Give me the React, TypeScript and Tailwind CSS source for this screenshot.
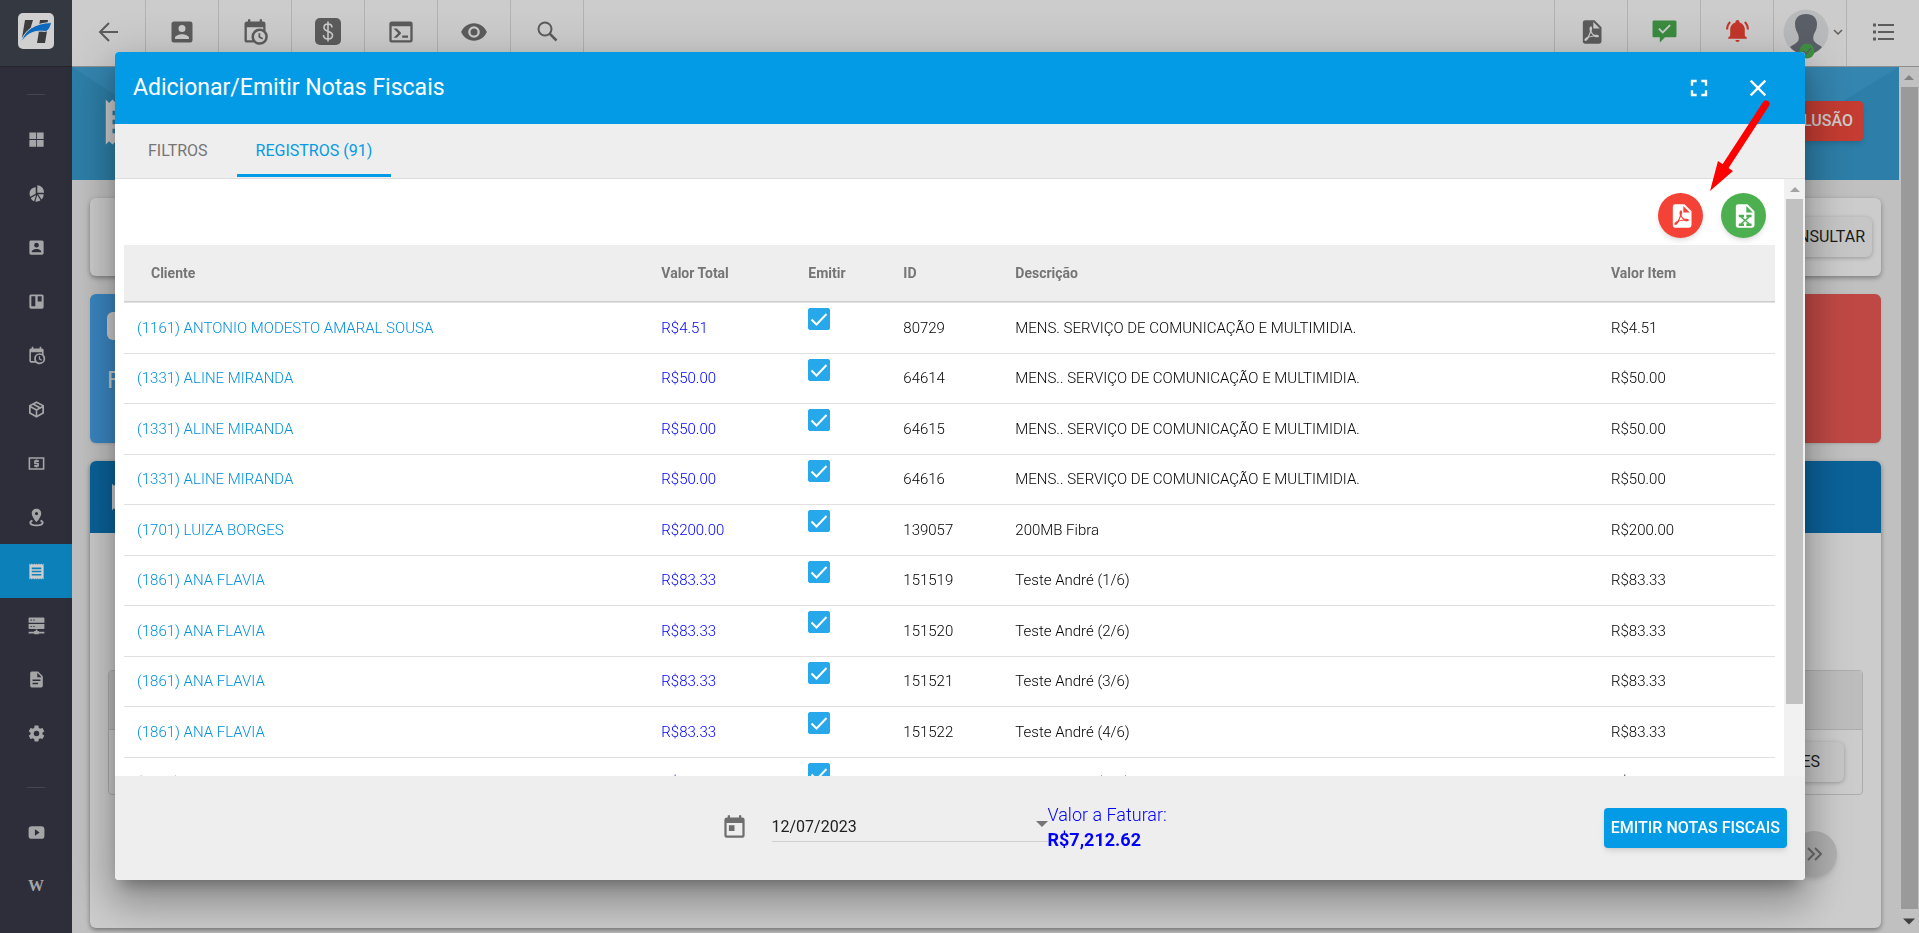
import React, { useState } from 'react'

const ICONS = {
    account: 'M6,17C6,15 10,13.9 12,13.9C14,13.9 18,15 18,17V18H6M15,9A3,3 0 0,1 12,12A3,3 0 0,1 9,9A3,3 0 0,1 12,6A3,3 0 0,1 15,9M3,5V19A2,2 0 0,0 5,21H19A2,2 0 0,0 21,19V5A2,2 0 0,0 19,3H5C3.89,3 3,3.9 3,5Z',
    calendarClock: 'M15,13H16.5V15.82L18.94,17.23L18.19,18.53L15,16.69V13M19,8H5V19H9.67C9.24,18.09 9,17.07 9,16A7,7 0 0,1 16,9C17.07,9 18.09,9.24 19,9.67V8M5,21C3.89,21 3,20.1 3,19V5C3,3.89 3.89,3 5,3H6V1H8V3H16V1H18V3H19A2,2 0 0,1 21,5V11.1C22.24,12.36 23,14.09 23,16A7,7 0 0,1 16,23C14.09,23 12.36,22.24 11.1,21H5M16,11.15A4.85,4.85 0 0,0 11.15,16C11.15,18.68 13.32,20.85 16,20.85A4.85,4.85 0 0,0 20.85,16C20.85,13.32 18.68,11.15 16,11.15Z',
    console: 'M20,19V7H4V19H20M20,3A2,2 0 0,1 22,5V19A2,2 0 0,1 20,21H4A2,2 0 0,1 2,19V5C2,3.89 2.9,3 4,3H20M13,17V15H18V17H13M9.58,13L5.57,9H8.4L11.7,12.3C12.09,12.69 12.09,13.33 11.7,13.72L8.42,17H5.59L9.58,13Z',
    eye: 'M12,9A3,3 0 0,0 9,12A3,3 0 0,0 12,15A3,3 0 0,0 15,12A3,3 0 0,0 12,9M12,17A5,5 0 0,1 7,12A5,5 0 0,1 12,7A5,5 0 0,1 17,12A5,5 0 0,1 12,17M12,4.5C7,4.5 2.73,7.61 1,12C2.73,16.39 7,19.5 12,19.5C17,19.5 21.27,16.39 23,12C21.27,7.61 17,4.5 12,4.5Z',
    bell: 'M21,19V20H3V19L5,17V11C5,7.9 7.03,5.17 10,4.29C10,4.19 10,4.1 10,4A2,2 0 0,1 12,2A2,2 0 0,1 14,4C14,4.1 14,4.19 14,4.29C16.97,5.17 19,7.9 19,11V17L21,19M14,21A2,2 0 0,1 12,23A2,2 0 0,1 10,21M19.75,3.19L18.33,4.61C20.04,6.3 21,8.6 21,11H23C23,8.07 21.84,5.25 19.75,3.19M1,11H3C3,8.6 3.96,6.3 5.67,4.61L4.25,3.19C2.16,5.25 1,8.07 1,11Z',
    check: 'M2,2.5C0.9,2.5 0.5,3 0.5,4V17C0.5,18 1,18.5 2,18.5H7.5V23.5L12.5,18.5H22C23,18.5 23.5,18 23.5,17V4C23.5,3 23,2.5 22,2.5H2M16.7,6.2L18,7.5L10.3,15.2L6,10.9L7.3,9.6L10.3,12.6L16.7,6.2Z',
    calendar: 'M7,10H12V15H7M19,19H5V8H19M19,3H18V1H16V3H8V1H6V3H5C3.89,3 3,3.9 3,5V19A2,2 0 0,0 5,21H19A2,2 0 0,0 21,19V5A2,2 0 0,0 19,3Z',
    fullscreen: 'M5,5H10V7H7V10H5V5M14,5H19V10H17V7H14V5M17,14H19V19H14V17H17V14M10,17V19H5V14H7V17H10Z',
    close: 'M19,6.41L17.59,5L12,10.59L6.41,5L5,6.41L10.59,12L5,17.59L6.41,19L12,13.41L17.59,19L19,17.59L13.41,12L19,6.41Z',
    pdf: 'M14,9H19.5L14,3.5V9M7,2H15L21,8V20A2,2 0 0,1 19,22H7C5.89,22 5,21.1 5,20V4A2,2 0 0,1 7,2M11.93,12.44C12.34,13.34 12.86,14.08 13.46,14.59L13.87,14.91C13,15.07 11.8,15.35 10.53,15.84L10.42,15.88L10.92,14.84C11.37,13.97 11.7,13.18 11.93,12.44M18.41,16.25C18.59,16.07 18.68,15.84 18.69,15.59C18.72,15.39 18.67,15.2 18.57,15.04C18.28,14.57 17.53,14.35 16.29,14.35L15,14.42L14.13,13.84C13.5,13.32 12.93,12.41 12.53,11.28L12.57,11.14C12.9,9.81 13.21,8.2 12.55,7.54C12.39,7.38 12.17,7.3 11.94,7.3H11.7C11.33,7.3 11,7.69 10.91,8.07C10.54,9.4 10.76,10.13 11.13,11.34C10.88,12.23 10.56,13.25 10.05,14.28L9.09,16.08L8.2,16.57C7,17.32 6.43,18.16 6.32,18.69C6.28,18.88 6.3,19.05 6.37,19.23L6.4,19.28L6.88,19.59L7.32,19.7C8.13,19.7 9.05,18.75 10.29,16.63L10.47,16.56C11.5,16.23 12.78,16 14.5,15.81C15.53,16.32 16.74,16.55 17.5,16.55C17.94,16.55 18.24,16.44 18.41,16.25Z',
    excel: 'M14,9H19.5L14,3.5V9M7,2H15L21,8V20A2,2 0 0,1 19,22H7C5.89,22 5,21.1 5,20V4A2,2 0 0,1 7,2M18.500,11H14V13H15.2L13,15L10.8,13H12V11H7.500V13H9L12,15.8L9,18.500H7.500V20.5H12V18.500H10.8L13,16.6L15.2,18.500H14V20.5H18.500V18.500H17L14,15.8L17,13H18.500V11Z',
    grid: 'M3,3H11.5V11.5H3V3M12.5,3H21V11.5H12.5V3M3,12.5H11.5V21H3V12.5M12.5,12.5H21V21H12.5V12.5Z',
    pie: 'M13,1.5C17.5,1.5 21.5,5 21.5,11H13V1.500M11,4V12.2L4.2,16C1.5,9.5 5,4.5 11,4M11.6,13.8L9,21.8C7,21 5.5,19.5 4.8,17.6L11.600,13.800M13,14L17,20.500C15,22 12.500,22.500 10.500,22.200L13,14M14,13H21C21,16 20,18.200 18.400,19.600L14,13Z',
    board: 'M5,3H19A2,2 0 0,1 21,5V19A2,2 0 0,1 19,21H5A2,2 0 0,1 3,19V5A2,2 0 0,1 5,3M5.5,5.5V18H10.5V5.5H5.5M13.5,5.5V12H18.5V5.5H13.5Z',
    cube: 'M12,1.5L21.5,6.5V17L12,22.5L2.5,17V6.5L12,1.5M12,4L9.8,5.1L16.8,8.9L19,7.7L12,4M7.6,6.3L5,7.7L12,11.4L14.5,10.1L7.6,6.3M4.7,9.8V15.9L11,19.4V13.2L4.7,9.8M19.3,9.8L13,13.2V19.4L19.3,15.9V9.8Z',
    cash: 'M2,4H22V20H2V4M4,6V18H20V6H4M11,7H13V8H15V10H11V11H14A1,1 0 0,1 15,12V15A1,1 0 0,1 14,16H13V17H11V16H9V14H13V13H10A1,1 0 0,1 9,12V9A1,1 0 0,1 10,8H11V7Z',
    marker: 'M12,1C15.5,1 18,3.6 18,7C18,11.5 12,18 12,18C12,18 6,11.5 6,7C6,3.6 8.5,1 12,1M12,5A2,2 0 0,0 12,9A2,2 0 0,0 12,5M21,18.5C21,21.5 17,23 12,23C7,23 3,21.5 3,18.5C3,16.8 4.3,15.6 6.3,14.9L7.6,16.6C6.3,17 5.5,17.7 5.5,18.5C5.5,19.8 8.4,20.8 12,20.8C15.6,20.8 18.5,19.8 18.5,18.5C18.5,17.7 17.7,17 16.4,16.6L17.7,14.9C19.7,15.6 21,16.8 21,18.5Z',
    receipt: 'M3,22L4.5,20.5L6,22L7.5,20.5L9,22L10.5,20.5L12,22L13.5,20.5L15,22L16.5,20.5L18,22L19.5,20.5L21,22V2L19.5,3.5L18,2L16.5,3.5L15,2L13.5,3.5L12,2L10.5,3.5L9,2L7.5,3.5L6,2L4.5,3.5L3,2M18,9H6V7H18M18,13H6V11H18M18,17H6V15H18V17Z',
    server: 'M3,2H21A1,1 0 0,1 22,3V8.500H2V3A1,1 0 0,1 3,2M4.500,4.500V6H6V4.500H4.500M8,4.500V6H9.500V4.500H8M2,10H22V15.500A1,1 0 0,1 21,16.500H3A1,1 0 0,1 2,15.500V10M4.500,12.500V14H6V12.500H4.500M8,12.500V14H9.500V12.500H8M11,17H13V19H15V20H22V22H15V23H9V22H2V20H9V19H11Z',
    file: 'M6,2A2,2 0 0,0 4,4V20A2,2 0 0,0 6,22H18A2,2 0 0,0 20,20V8L14,2H6M13,3.5L18.5,9H13V3.5M7,12H17V14H7V12M7,16H14V18H7V16Z',
    cog: 'M12,15.5A3.5,3.5 0 0,1 8.5,12A3.5,3.5 0 0,1 12,8.5A3.5,3.5 0 0,1 15.5,12A3.5,3.5 0 0,1 12,15.5M19.43,12.97C19.47,12.65 19.5,12.33 19.5,12C19.5,11.67 19.47,11.34 19.43,11L21.54,9.37C21.73,9.22 21.78,8.95 21.66,8.73L19.66,5.27C19.54,5.05 19.27,4.96 19.05,5.05L16.56,6.05C16.04,5.66 15.5,5.32 14.87,5.07L14.5,2.42C14.46,2.18 14.25,2 14,2H10C9.75,2 9.54,2.18 9.5,2.42L9.13,5.07C8.5,5.32 7.96,5.66 7.44,6.05L4.95,5.05C4.73,4.96 4.46,5.05 4.34,5.27L2.34,8.73C2.21,8.95 2.27,9.22 2.46,9.37L4.57,11C4.53,11.34 4.5,11.67 4.5,12C4.5,12.33 4.53,12.65 4.57,12.97L2.46,14.63C2.27,14.78 2.21,15.05 2.34,15.27L4.34,18.73C4.46,18.95 4.73,19.03 4.95,18.95L7.44,17.94C7.96,18.34 8.5,18.68 9.13,18.93L9.5,21.58C9.54,21.82 9.75,22 10,22H14C14.25,22 14.46,21.82 14.5,21.58L14.87,18.93C15.5,18.67 16.04,18.34 16.56,17.94L19.05,18.95C19.27,19.03 19.54,18.95 19.66,18.73L21.66,15.27C21.78,15.05 21.73,14.78 21.54,14.63L19.43,12.97Z',
    video: 'M6,4H18A4,4 0 0,1 22,8V16A4,4 0 0,1 18,20H6A4,4 0 0,1 2,16V8A4,4 0 0,1 6,4M10,8V16L16,12L10,8Z',
}

type IconName = keyof typeof ICONS

function Icon({ name, className }: { name: IconName; className?: string }) {
    return (
        <svg viewBox="0 0 24 24" className={className} fill="currentColor" fillRule="evenodd" aria-hidden="true">
            <path d={ICONS[name]} />
        </svg>
    )
}

const rows = [
    { cliente: '(1161) ANTONIO MODESTO AMARAL SOUSA', valor: 'R$4.51', id: '80729', descricao: 'MENS. SERVIÇO DE COMUNICAÇÃO E MULTIMIDIA.' },
    { cliente: '(1331) ALINE MIRANDA', valor: 'R$50.00', id: '64614', descricao: 'MENS.. SERVIÇO DE COMUNICAÇÃO E MULTIMIDIA.' },
    { cliente: '(1331) ALINE MIRANDA', valor: 'R$50.00', id: '64615', descricao: 'MENS.. SERVIÇO DE COMUNICAÇÃO E MULTIMIDIA.' },
    { cliente: '(1331) ALINE MIRANDA', valor: 'R$50.00', id: '64616', descricao: 'MENS.. SERVIÇO DE COMUNICAÇÃO E MULTIMIDIA.' },
    { cliente: '(1701) LUIZA BORGES', valor: 'R$200.00', id: '139057', descricao: '200MB Fibra' },
    { cliente: '(1861) ANA FLAVIA', valor: 'R$83.33', id: '151519', descricao: 'Teste André (1/6)' },
    { cliente: '(1861) ANA FLAVIA', valor: 'R$83.33', id: '151520', descricao: 'Teste André (2/6)' },
    { cliente: '(1861) ANA FLAVIA', valor: 'R$83.33', id: '151521', descricao: 'Teste André (3/6)' },
    { cliente: '(1861) ANA FLAVIA', valor: 'R$83.33', id: '151522', descricao: 'Teste André (4/6)' },
    { cliente: '(1861) ANA FLAVIA', valor: 'R$83.33', id: '151523', descricao: 'Teste André (5/6)' },
]

const menu: { icon: IconName; label: string }[] = [
    { icon: 'grid', label: 'Painel' },
    { icon: 'pie', label: 'Gráficos' },
    { icon: 'account', label: 'Clientes' },
    { icon: 'board', label: 'Quadros' },
    { icon: 'calendarClock', label: 'Agenda' },
    { icon: 'cube', label: 'Estoque' },
    { icon: 'cash', label: 'Financeiro' },
    { icon: 'marker', label: 'Mapa' },
    { icon: 'receipt', label: 'Notas Fiscais' },
    { icon: 'server', label: 'Servidores' },
    { icon: 'file', label: 'Relatórios' },
    { icon: 'cog', label: 'Configurações' },
]

function MenuDivider() {
    return (
        <div className="flex h-[45px] justify-center pt-[27px]">
            <div className="h-px w-[18px] bg-[#45464f]" />
        </div>
    )
}

function Sidebar() {
    return (
        <nav className="flex w-[72px] shrink-0 flex-col bg-[#2d2e3a] text-[#a5a5a8]">
            <div className="flex h-[67px] shrink-0 justify-center border-b border-[#22232b] bg-[#343840] pt-[13px]">
                <svg viewBox="0 0 36 36" className="size-9" aria-hidden="true">
                    <rect width="36" height="36" rx="5" fill="#d0d0d0" />
                    <path d="M7 7h8l-3 10-8 8zM22 7h8l-1 6h-8zM21 18h8l-2 12h-8z" fill="#3c3c3e" />
                    <path d="M3 29.500C6 17 17 10 33.500 9.500c-1 5-3 8-6 9C17 17 9 20 3 29.500z" fill="#0d69bd" stroke="#d0d0d0" strokeWidth="1" />
                </svg>
            </div>
            <MenuDivider />
            {menu.map(item => (
                <a
                    key={item.label}
                    href="#"
                    aria-label={item.label}
                    className={`flex h-[54px] shrink-0 items-center justify-center ${item.icon === 'receipt' ? 'bg-[#0b80b9] text-[#cccccc]' : ''}`}
                >
                    <Icon name={item.icon} className="size-[19px]" />
                </a>
            ))}
            <MenuDivider />
            <a href="#" aria-label="Vídeos" className="flex h-[54px] items-center justify-center">
                <Icon name="video" className="size-[19px]" />
            </a>
            <a href="#" className="flex h-[54px] items-center justify-center font-['Liberation_Serif',serif] text-[16px] font-bold">
                W
            </a>
        </nav>
    )
}

const topCell = 'flex w-[73px] shrink-0 justify-center border-[#b2b2b2] pt-[18px]'

function TopBar() {
    return (
        <header className="flex h-[67px] shrink-0 justify-between overflow-hidden border-b border-[#8f8f8f] bg-[#cccccc] text-[#5c5c5c]">
            <div className="flex pl-px">
                <button aria-label="Voltar" className={`${topCell} border-r`}>
                    <svg viewBox="0 0 28 28" className="size-7" fill="none" stroke="currentColor" strokeWidth="2">
                        <path d="M23 14H6M14 5l-9 9 9 9" />
                    </svg>
                </button>
                <button aria-label="Clientes" className={`${topCell} border-r`}>
                    <Icon name="account" className="size-7" />
                </button>
                <button aria-label="Agenda" className={`${topCell} border-r`}>
                    <Icon name="calendarClock" className="size-7" />
                </button>
                <button aria-label="Financeiro" className={`${topCell} border-r`}>
                    <svg viewBox="0 0 28 28" className="size-7">
                        <rect x="1" y="0" width="26" height="27" rx="5" fill="currentColor" />
                        <path d="M18 9.500c0-2-1.500-3.500-4-3.500s-4 1.400-4 3.600c0 4.900 8.500 2.800 8.500 7.600 0 2.300-2 3.800-4.500 3.800s-4.500-1.500-4.500-4M14 3.500v20" fill="none" stroke="#cccccc" strokeWidth="1.600" />
                    </svg>
                </button>
                <button aria-label="Terminal" className={`${topCell} border-r`}>
                    <Icon name="console" className="size-7" />
                </button>
                <button aria-label="Visualizar" className={`${topCell} border-r`}>
                    <Icon name="eye" className="size-7" />
                </button>
                <button aria-label="Pesquisar" className={`${topCell} border-r`}>
                    <svg viewBox="0 0 28 28" className="size-7" fill="none" stroke="currentColor" strokeWidth="2">
                        <circle cx="12" cy="11" r="6.500" />
                        <path d="M16.500 15.500l7 7" strokeWidth="2.500" />
                    </svg>
                </button>
            </div>
            <div className="flex">
                <button aria-label="PDF" className={`${topCell} border-l`}>
                    <Icon name="pdf" className="size-7" />
                </button>
                <button aria-label="Mensagens" className={`${topCell} border-l text-[#3b8b3f]`}>
                    <Icon name="check" className="size-[25px]" />
                </button>
                <button aria-label="Notificações" className={`${topCell} border-l text-[#c4362b]`}>
                    <Icon name="bell" className="size-[25px]" />
                </button>
                <button aria-label="Perfil" className="flex w-[73px] gap-1 border-l border-[#b2b2b2] pt-[9px] pl-[9px]">
                    <svg viewBox="0 0 46 50" className="h-[50px] w-[46px] shrink-0">
                        <circle cx="23" cy="23" r="22.500" fill="#b9babc" />
                        <path d="M23 5c7 0 11 4 11 10 0 5-2 8-3 10-1 3-1 6 0 7 2 3 6 4 8 6-4 5-10 7.500-16 7.500S11 43 7 38c2-2 6-3 8-6 1-1 1-4 0-7-1-2-3-5-3-10C12 9 16 5 23 5z" fill="#5a5f68" />
                        <circle cx="24" cy="42" r="7.500" fill="#3f9143" />
                        <path d="M20 42l3 3 5-6" fill="none" stroke="#5a5f68" strokeWidth="1.500" />
                    </svg>
                    <svg viewBox="0 0 10 46" className="h-[46px] w-[10px] shrink-0" fill="none" stroke="currentColor" strokeWidth="1.500">
                        <path d="M1 21l4 4 4-4" />
                    </svg>
                </button>
                <button aria-label="Menu" className={`${topCell} border-l`}>
                    <svg viewBox="0 0 28 28" className="size-7" fill="none" stroke="currentColor" strokeWidth="2">
                        <path d="M9 7h16M9 14h16M9 21h16" />
                        <path d="M4 7h3M4 14h3M4 21h3" strokeWidth="3" />
                    </svg>
                </button>
            </div>
        </header>
    )
}

function PageContent() {
    return (
        <main className="flex min-w-0 flex-1 flex-col bg-[#c0c0c0]">
            <div className="relative flex h-[113px] shrink-0 items-start justify-between bg-[#2d7ea8] pr-9 pl-[27px]">
                <svg viewBox="0 0 1827 113" preserveAspectRatio="none" className="absolute inset-0 size-full" aria-hidden="true">
                    <path d="M0 0L174 113H1642L1827 0z" fill="#3485b0" />
                </svg>
                <Icon name="receipt" className="relative mt-7 size-[54px] text-[#cccccc]" />
                <button className="relative mt-[34px] h-10 rounded bg-[#c43c32] px-[10px] text-[16px] font-medium text-[#cccccc] shadow-md">
                    INCLUSÃO
                </button>
            </div>
            <div className="flex flex-1 flex-col gap-[18px] px-[18px] pt-[18px] pb-[5px]">
                <div className="flex h-[78px] shrink-0 items-center justify-end rounded-md bg-[#cccccc] pr-[9px] shadow-[0_2px_5px_rgba(0,0,0,0.35)]">
                    <button className="h-10 rounded-md bg-[#c6c6c6] px-[7px] text-[16px] text-[#1b1b1b] shadow-[0_1px_4px_rgba(0,0,0,0.25)]">
                        CONSULTAR
                    </button>
                </div>
                <div className="grid h-[149px] shrink-0 grid-cols-2 gap-[18px]">
                    <div className="flex flex-col gap-6 rounded-md bg-[#3a86c2] pt-[18px] pl-[17px] text-[#cccccc] shadow-sm">
                        <div className="size-7 shrink-0 rounded-md bg-[#cccccc]" />
                        <span className="text-[24px] leading-8">Faturas</span>
                    </div>
                    <div className="rounded-md bg-[#bf4844] shadow-sm" />
                </div>
                <section className="flex flex-1 flex-col rounded-md bg-[#cccccc] shadow-[0_2px_5px_rgba(0,0,0,0.4)]">
                    <div className="flex h-[72px] shrink-0 items-center rounded-t-md bg-[#0a6299] pl-[18px] text-[#cccccc]">
                        <Icon name="receipt" className="size-8" />
                    </div>
                    <div className="flex flex-1 flex-col items-end px-[18px] pt-[137px]">
                        <table className="w-full border-separate border-spacing-0 rounded border border-[#adadad]">
                            <thead>
                                <tr>
                                    <th className="h-[59px] border-b border-[#adadad] bg-[#bdbdbd] pr-[58px] text-right text-[14px] font-medium text-[#555555]">Ações</th>
                                </tr>
                            </thead>
                            <tbody>
                                <tr>
                                    <td className="h-[64px] pr-[18px] text-right">
                                        <button className="h-10 rounded-md bg-[#c6c6c6] px-6 text-[16px] text-[#1b1b1b] shadow-[0_1px_4px_rgba(0,0,0,0.25)]">
                                            AÇÕES
                                        </button>
                                    </td>
                                </tr>
                            </tbody>
                        </table>
                        <button aria-label="Última página" className="mt-9 mr-[26px] flex size-[46px] items-center justify-center rounded-full bg-[#b0b0b0] text-[#6a6a6a] shadow-md">
                            <svg viewBox="0 0 16 16" className="size-4" fill="none" stroke="currentColor" strokeWidth="2">
                                <path d="M2 2l6 6-6 6M9 2l6 6-6 6" />
                            </svg>
                        </button>
                    </div>
                </section>
            </div>
        </main>
    )
}

function ScrollArrow({ down, className }: { down?: boolean; className: string }) {
    return (
        <svg viewBox="0 0 20 20" className={className} fill="currentColor" aria-hidden="true">
            <path d={down ? 'M5 8h10l-5 5z' : 'M5 13h10l-5-5z'} />
        </svg>
    )
}

function rowHeight(index: number) {
    if (index === 0) return '[&>td]:h-[52px] [&>td]:border-t'
    return index % 2 ? '[&>td]:h-[50px]' : '[&>td]:h-[51px]'
}

function InvoiceTable() {
    const [checked, setChecked] = useState<Record<string, boolean>>({})

    return (
        <table className="w-full table-fixed border-separate border-spacing-0 text-left text-[15px] font-light text-black">
            <thead>
                <tr className="bg-[#eeeeee] text-[14px] text-[#757575] [&>th]:h-[57px] [&>th]:border-b [&>th]:border-[#cfcfcf] [&>th]:font-bold">
                    <th className="w-[32%] pl-[27px]">Cliente</th>
                    <th className="w-[147px] pl-[9px]">Valor Total</th>
                    <th className="w-[95px] pl-[9px]">Emitir</th>
                    <th className="w-[112px] pl-[9px]">ID</th>
                    <th className="pl-[9px]">Descrição</th>
                    <th className="w-[173px] pl-[9px]">Valor Item</th>
                </tr>
            </thead>
            <tbody>
                {rows.map((row, index) => (
                    <tr
                        key={row.id}
                        className={`[&>td]:border-b [&>td]:border-[#e0e0e0] [&>td]:pl-[9px] ${rowHeight(index)}`}
                    >
                        <td>
                            <a href="#" className="pl-1 text-[#0090dd]">{row.cliente}</a>
                        </td>
                        <td className="text-[#0000ff]">{row.valor}</td>
                        <td className="pt-[5px] align-top">
                            <label className="relative block size-[22px]">
                                <input
                                    type="checkbox"
                                    aria-label={`Emitir ${row.id}`}
                                    checked={checked[row.id] ?? true}
                                    onChange={e => setChecked({ ...checked, [row.id]: e.target.checked })}
                                    className="peer block size-[22px] appearance-none rounded-[2px] border border-[#26a8ea] checked:bg-[#26a8ea]"
                                />
                                <svg viewBox="0 0 22 22" className="pointer-events-none absolute inset-0 hidden size-[22px] peer-checked:block" fill="none" stroke="#ffffff" strokeWidth="2">
                                    <path d="M3.500 11.500l5 5 10-10.500" />
                                </svg>
                            </label>
                        </td>
                        <td>{row.id}</td>
                        <td>{row.descricao}</td>
                        <td>{row.valor}</td>
                    </tr>
                ))}
            </tbody>
        </table>
    )
}

function InvoiceDialog() {
    const [date, setDate] = useState('12/07/2023')

    return (
        <div
            role="dialog"
            aria-labelledby="dialog-title"
            className="relative flex h-full w-full flex-col rounded bg-white shadow-[0_11px_15px_-7px_rgba(0,0,0,0.3),0_24px_38px_3px_rgba(0,0,0,0.2),0_9px_46px_8px_rgba(0,0,0,0.14)]"
        >
            <div className="flex h-[72px] shrink-0 items-center rounded-t bg-[#039be5] pr-[33px] pl-[18px] text-white">
                <h2 id="dialog-title" className="flex-1 text-[23px] leading-8">Adicionar/Emitir Notas Fiscais</h2>
                <button aria-label="Tela cheia" className="mr-[31px]">
                    <Icon name="fullscreen" className="size-7" />
                </button>
                <button aria-label="Fechar">
                    <Icon name="close" className="size-7" />
                </button>
            </div>

            <div role="tablist" className="flex h-[55px] shrink-0 gap-[10px] border-b border-[#dddddd] bg-[#eeeeee] pl-[14px] text-[16px]">
                <button role="tab" aria-selected="false" className="mb-px border-b-3 border-transparent px-[19px] pt-1 text-[#757575]">
                    FILTROS
                </button>
                <button role="tab" aria-selected="true" className="mb-px border-b-3 border-[#039be5] px-[19px] pt-1 text-[#039be5]">
                    REGISTROS (91)
                </button>
            </div>

            <div className="flex min-h-0 flex-1">
                <div className="min-w-0 flex-1 overflow-hidden px-[9px]">
                    <div className="flex justify-end gap-[18px] pt-[14px] pr-[9px] pb-[7px] text-white">
                        <button aria-label="Exportar PDF" className="flex size-[45px] items-center justify-center rounded-full bg-[#f44336] shadow-md">
                            <Icon name="pdf" className="size-7" />
                        </button>
                        <button aria-label="Exportar Excel" className="flex size-[45px] items-center justify-center rounded-full bg-[#4caf50] shadow-md">
                            <Icon name="excel" className="size-7" />
                        </button>
                    </div>
                    <InvoiceTable />
                </div>
                <div className="flex w-[21px] shrink-0 flex-col items-center bg-[#f1f1f1]">
                    <ScrollArrow className="size-5 text-[#a3a3a3]" />
                    <div className="h-[505px] w-[17px] bg-[#c1c1c1]" />
                </div>
            </div>

            <div className="grid h-[104px] shrink-0 grid-cols-[1fr_auto_1fr] items-center rounded-b bg-[#eeeeee] px-[18px]">
                <div className="col-start-2 flex items-center pb-[2px]">
                    <Icon name="calendar" className="size-[27px] text-[#6e6e6e]" />
                    <div className="relative ml-6 w-[276px]">
                        <input
                            aria-label="Data de emissão"
                            value={date}
                            onChange={e => setDate(e.target.value)}
                            className="block h-[30px] w-full border-b border-[#cfcfcf] bg-transparent text-[16px] text-[#212121] outline-none"
                        />
                        <svg viewBox="0 0 12 6" className="absolute top-[9px] right-0 h-[6px] w-3" fill="#757575">
                            <path d="M0 0h12L6 6z" />
                        </svg>
                    </div>
                    <div className="w-[152px] text-[18px] leading-[25px] text-[#0000ff]">
                        <p className="font-light">Valor a Faturar:</p>
                        <p className="font-bold">R$7,212.62</p>
                    </div>
                </div>
                <button className="h-10 justify-self-end rounded bg-[#039be5] px-[7px] text-[16px] font-medium text-white shadow-md">
                    EMITIR NOTAS FISCAIS
                </button>
            </div>

            {/* Arrow pointing at the PDF export button */}
            <svg viewBox="0 0 64 94" className="pointer-events-none absolute top-[47px] right-[34px] h-[94px] w-16" aria-hidden="true">
                <path d="M59 5L18 68" stroke="#ff0000" strokeWidth="7" strokeLinecap="round" />
                <path d="M3 92L11 62l15 10z" fill="#ff0000" />
            </svg>
        </div>
    )
}

export default function App() {
    return (
        <div className="flex h-screen overflow-hidden font-[Roboto,sans-serif]">
            <Sidebar />
            <div className="flex min-w-0 flex-1 flex-col">
                <TopBar />
                <div className="flex min-h-0 flex-1">
                    <PageContent />
                    <div className="flex w-5 shrink-0 flex-col items-center bg-[#c1c1c1]">
                        <ScrollArrow className="size-5 shrink-0 text-[#828282]" />
                        <div className="w-[17px] flex-1 bg-[#9a9a9a]" />
                        <ScrollArrow down className="size-6 shrink-0 text-[#404040]" />
                    </div>
                </div>
            </div>
            <div className="fixed inset-0 pt-[52px] pr-[114px] pb-[53px] pl-[115px]">
                <InvoiceDialog />
            </div>
        </div>
    )
}
